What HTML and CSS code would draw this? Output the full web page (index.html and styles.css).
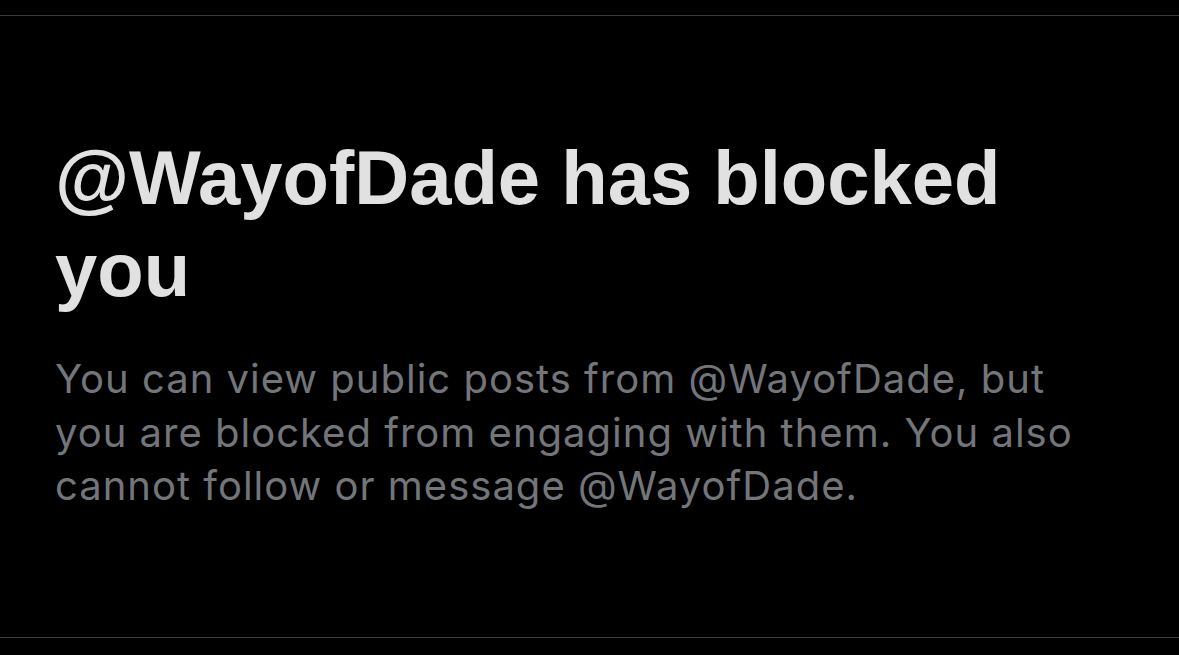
FILE: index.html
```html
<!DOCTYPE html>
<html lang="en">
<head>
<meta charset="utf-8">
<title>Blocked</title>
<link rel="stylesheet" href="styles.css">
</head>
<body>
<main class="panel">
  <h1 class="title">@WayofDade has blocked you</h1>
  <p class="desc">You can view public posts from @WayofDade, but you are blocked from engaging with them. You also cannot follow or message @WayofDade.</p>
</main>
</body>
</html>
```
FILE: styles.css
```css
html, body {
  margin: 0;
  padding: 0;
  background: #000;
}
body {
  height: 655px;
  overflow: hidden;
}
.panel {
  box-sizing: border-box;
  margin-top: 15px;
  height: 623px;
  border-top: 1px solid #3a3c3f;
  border-bottom: 1px solid #3a3c3f;
  padding: 116px 60px 0 55px;
}
.title {
  margin: 0;
  font-family: "Liberation Sans", Arial, sans-serif;
  font-weight: 700;
  font-size: 76px;
  line-height: 92px;
  color: #e1e1e1;
  max-width: 1000px;
}
.desc {
  margin: 36px 0 0;
  font-family: Inter, "Liberation Sans", sans-serif;
  font-weight: 400;
  font-size: 40px;
  letter-spacing: 1px;
  line-height: 53.5px;
  color: #72767a;
  max-width: 1040px;
}
```
